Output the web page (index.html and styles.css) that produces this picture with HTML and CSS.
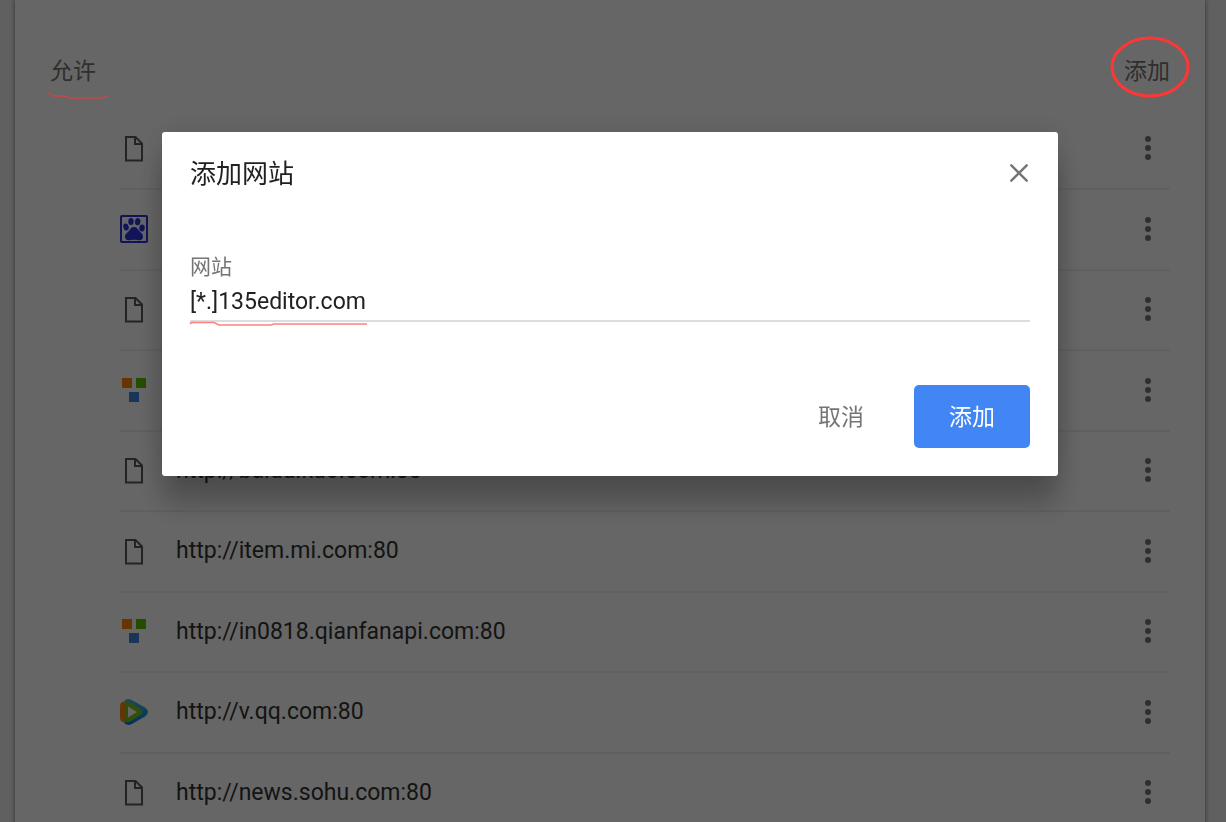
FILE: index.html
```html
<!DOCTYPE html>
<html lang="zh-CN">
<head>
<meta charset="utf-8">
<title>添加网站</title>
<meta name="viewport" content="width=device-width, initial-scale=1">
<link rel="stylesheet" href="styles.css">
</head>
<body>
<svg class="defs" aria-hidden="true">
  <symbol id="page" viewBox="0 0 28 28"><path d="M6 3h9.500l6.500 6.500v17h-16zM15 3v7h7" fill="none" stroke="#5a5a5a" stroke-width="2"/></symbol>
  <symbol id="paw" viewBox="0 0 28 28">
    <rect x="1" y="1" width="26" height="26" rx="1" fill="none" stroke="#2a32dd" stroke-width="2"/>
    <g fill="#2a32dd"><ellipse cx="6" cy="12" rx="2.700" ry="3.600" transform="rotate(-12 6 12)"/><ellipse cx="11" cy="6.500" rx="2.700" ry="3.600"/><ellipse cx="17.700" cy="6.700" rx="2.700" ry="3.600" transform="rotate(10 17.700 6.700)"/><ellipse cx="22" cy="13" rx="2.700" ry="3.500" transform="rotate(8 22 13)"/><path d="M14 12c2.800 0 3.800 2.200 5.500 4.200 1.800 2 3.700 3 3.500 5.800-.2 2.500-2 3.500-4.500 3.200-2-.3-3-.5-4.500-.5s-2.500.3-4.500.5c-2.500.3-4.300-.7-4.500-3.200-.2-2.800 2-4 3.700-5.800 1.700-2 2.500-4.200 5.300-4.200z"/></g>
  </symbol>
  <symbol id="tiles" viewBox="0 0 28 28"><path fill="#ff8400" d="M2 2h10v10h-10z"/><path fill="#60bf00" d="M16 2h10v10h-10z"/><path fill="#3f86dc" d="M9 16h10v10h-10z"/></symbol>
  <symbol id="play" viewBox="0 0 28 28">
    <path d="M4 3.500Q6 0 11 1.500L25 9.500Q31 14 25 18.500L11 26.500Q6 28 4 24.500z" fill="url(#playblue)"/>
    <path d="M5 4Q0 3 0 9v10q0 6 5 5z" fill="#f28a16"/>
    <path d="M5 4Q8 3 12 5.500l8.500 5.500q4 3 0 6L12 22.500Q8 25 5 24z" fill="#78c51c"/>
    <path d="M8 8.500l9 5.500-9 5.500z" fill="#fff"/>
  </symbol>
  <linearGradient id="playblue" x1="0" y1="0" x2="0" y2="1"><stop offset="0" stop-color="#43b9ec"/><stop offset="1" stop-color="#0878d8"/></linearGradient>
  <symbol id="more" viewBox="0 0 28 28"><g fill="#757575"><circle cx="14" cy="5" r="3"/><circle cx="14" cy="14" r="3"/><circle cx="14" cy="23" r="3"/></g></symbol>
</svg>
<main class="card">
  <header class="section-head">
    <h2 class="section-title">允许</h2>
    <button class="text-button">添加</button>
  </header>
  <ul class="sites">
    <li class="site"><svg class="icon"><use href="#page"/></svg><button class="more" aria-label="更多"><svg class="icon"><use href="#more"/></svg></button></li>
    <li class="site"><svg class="icon"><use href="#paw"/></svg><button class="more" aria-label="更多"><svg class="icon"><use href="#more"/></svg></button></li>
    <li class="site"><svg class="icon"><use href="#page"/></svg><button class="more" aria-label="更多"><svg class="icon"><use href="#more"/></svg></button></li>
    <li class="site"><svg class="icon"><use href="#tiles"/></svg><button class="more" aria-label="更多"><svg class="icon"><use href="#more"/></svg></button></li>
    <li class="site"><svg class="icon"><use href="#page"/></svg><span class="url">http://baidu.kuo.com:80</span><button class="more" aria-label="更多"><svg class="icon"><use href="#more"/></svg></button></li>
    <li class="site"><svg class="icon"><use href="#page"/></svg><span class="url">http://item.mi.com:80</span><button class="more" aria-label="更多"><svg class="icon"><use href="#more"/></svg></button></li>
    <li class="site"><svg class="icon"><use href="#tiles"/></svg><span class="url">http://in0818.qianfanapi.com:80</span><button class="more" aria-label="更多"><svg class="icon"><use href="#more"/></svg></button></li>
    <li class="site"><svg class="icon"><use href="#play"/></svg><span class="url">http://v.qq.com:80</span><button class="more" aria-label="更多"><svg class="icon"><use href="#more"/></svg></button></li>
    <li class="site"><svg class="icon"><use href="#page"/></svg><span class="url">http://news.sohu.com:80</span><button class="more" aria-label="更多"><svg class="icon"><use href="#more"/></svg></button></li>
  </ul>
</main>
<div class="scrim">
  <section class="dialog" role="dialog" aria-modal="true" aria-labelledby="dialog-title">
    <header class="dialog-head">
      <h1 class="dialog-title" id="dialog-title">添加网站</h1>
      <button class="close" aria-label="关闭"><svg class="close-icon" viewBox="0 0 20 20"><path d="M3 3l14 14M17 3l-14 14" fill="none" stroke="#757575" stroke-width="2.200" stroke-linecap="round"/></svg></button>
    </header>
    <div class="field">
      <label class="label" for="site">网站</label>
      <input class="input" id="site" type="text" value="[*.]135editor.com">
      <svg class="mark mark-input" viewBox="0 0 180 6" aria-hidden="true"><path d="M1 3Q2 1 5 1.500h20l5 2.500h52l3-1h93" fill="none" stroke="#ff8080" stroke-width="1.600"/></svg>
    </div>
    <footer class="actions">
      <button class="cancel">取消</button>
      <button class="submit">添加</button>
    </footer>
  </section>
</div>
<svg class="mark mark-title" viewBox="0 0 62 8" aria-hidden="true"><path d="M0 1l5 3h11l5 2h31l4-1h4" fill="none" stroke="#c94545" stroke-width="1.500"/></svg>
<svg class="mark mark-add" viewBox="0 0 80 62" aria-hidden="true"><ellipse cx="40" cy="31" rx="38" ry="29" fill="none" stroke="#ff3636" stroke-width="3"/></svg>
</body>
</html>
```
FILE: styles.css
```css
* { box-sizing: border-box; }
body {
  margin: 0;
  height: 100vh;
  overflow: hidden;
  background: #f1f1f1;
  color: #333;
  font-family: Roboto, "Noto Sans CJK SC", sans-serif;
  font-size: 23px;
}
button {
  border: 0;
  padding: 0;
  background: none;
  color: inherit;
  font: inherit;
  cursor: pointer;
}
.defs { position: absolute; width: 0; height: 0; }
.card {
  min-height: 100vh;
  margin: 0 21px 0 15px;
  padding: 34px 35px 0;
  background: #fff;
  box-shadow: 0 0 5px rgba(0, 0, 0, .5);
}
.section-head {
  display: flex;
  align-items: center;
  justify-content: space-between;
  height: 74px;
  padding-bottom: 4px;
}
.section-title { margin: 0; font-size: 23px; font-weight: 400; color: #757575; }
.text-button { color: #757575; }
.sites { margin: 0 0 0 70px; padding: 0; list-style: none; }
.site {
  display: flex;
  align-items: center;
  gap: 28px;
  height: 80px;
}
.site:nth-child(even) { height: 81px; }
.site + .site { border-top: 2px solid #f0f0f0; padding-bottom: 2px; }
.icon { display: block; flex: none; width: 28px; height: 28px; }
.more { margin-left: auto; margin-right: 8px; }
.scrim {
  position: fixed;
  inset: 0;
  padding: 132px 21px 0 15px;
  background: rgba(0, 0, 0, .6);
}
.dialog {
  max-width: 896px;
  margin: 0 auto;
  padding: 20px 28px 28px;
  border-radius: 3px;
  background: #fff;
  box-shadow: 0 0 28px rgba(0, 0, 0, .12), 0 28px 28px rgba(0, 0, 0, .24);
}
.dialog-head {
  display: flex;
  align-items: center;
  justify-content: space-between;
  height: 42px;
}
.dialog-title { margin: 0; padding-bottom: 4px; font-size: 26px; font-weight: 400; color: #212121; }
.close-icon { display: block; width: 22px; height: 22px; }
.field { position: relative; margin-top: 58px; }
.label { display: block; font-size: 21px; line-height: 30px; color: #757575; }
.input {
  display: block;
  width: 100%;
  height: 40px;
  padding: 0;
  border: 0;
  border-bottom: 2px solid #ddd;
  outline: 0;
  background: none;
  color: #212121;
  font: inherit;
}
.actions {
  display: flex;
  justify-content: flex-end;
  margin-top: 63px;
}
.cancel, .submit { height: 63px; padding: 0 35px 4px; }
.cancel { margin-right: 15px; color: #757575; }
.submit { border-radius: 5px; background: #4285f4; color: #fff; }
.mark { position: absolute; pointer-events: none; }
.mark-input { left: -1px; bottom: -5px; width: 180px; height: 6px; }
.mark-title { left: 48px; top: 92px; width: 62px; height: 8px; }
.mark-add { right: 36px; top: 36px; width: 80px; height: 62px; }
```
